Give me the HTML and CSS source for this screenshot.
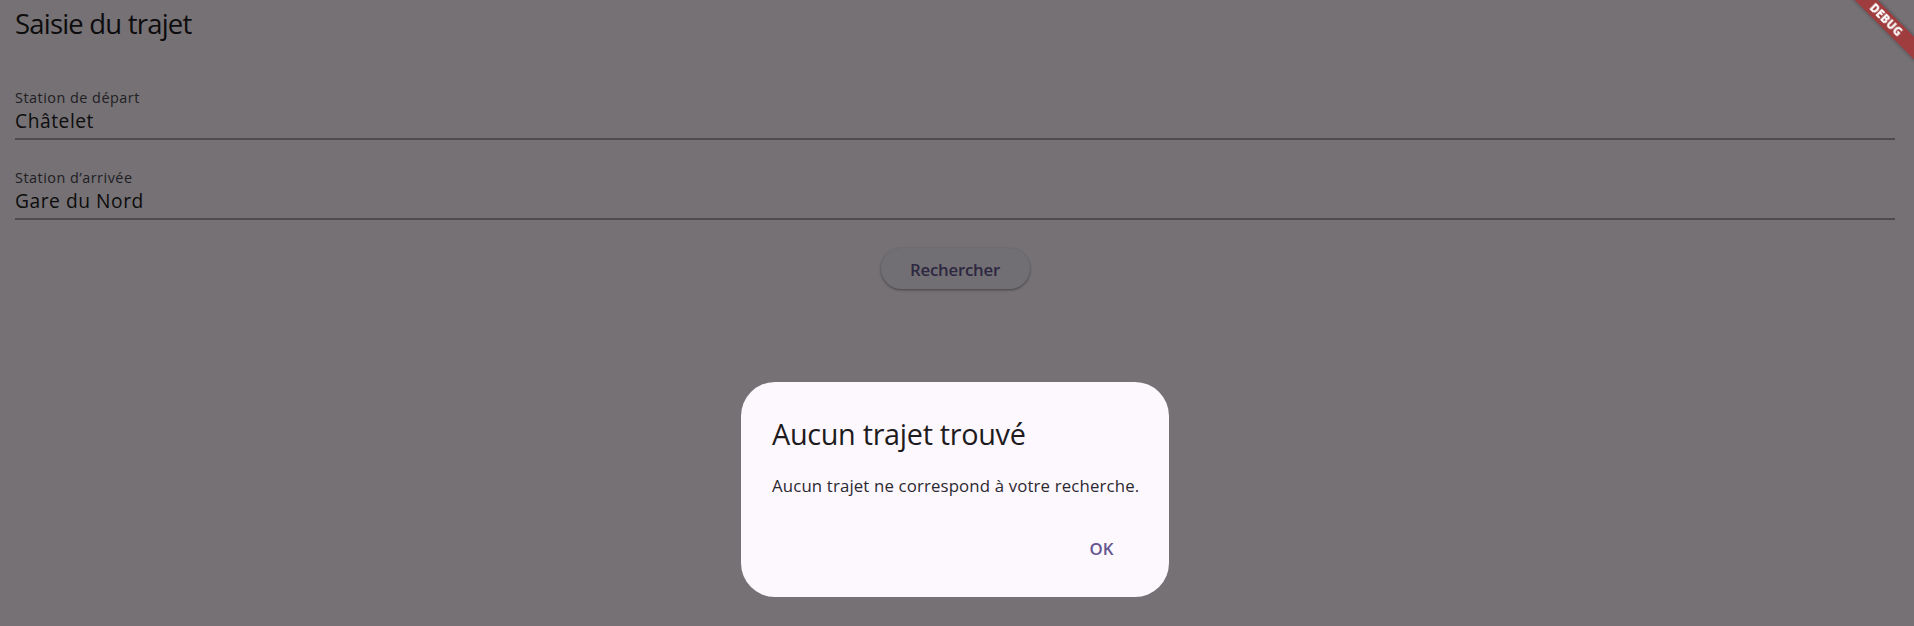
FILE: index.html
```html
<!DOCTYPE html>
<html lang="fr">
<head>
<meta charset="utf-8">
<title>Saisie du trajet</title>
<link rel="stylesheet" href="styles.css">
</head>
<body>
<div class="app">
  <h1 class="page-title">Saisie du trajet</h1>
  <div class="form">
    <div class="field">
      <label class="field-label">Station de départ</label>
      <div class="field-input">Châtelet</div>
    </div>
    <div class="field">
      <label class="field-label">Station d’arrivée</label>
      <div class="field-input">Gare du Nord</div>
    </div>
    <div class="actions">
      <button class="elevated-btn" type="button">Rechercher</button>
    </div>
  </div>
</div>

<div class="scrim">
  <div class="dialog" role="alertdialog">
    <h2 class="dialog-title">Aucun trajet trouvé</h2>
    <p class="dialog-content">Aucun trajet ne correspond à votre recherche.</p>
    <div class="dialog-actions">
      <button class="text-btn" type="button">OK</button>
    </div>
  </div>
</div>

<div class="debug-corner">
  <div class="debug-banner"><span class="debug-text">DEBUG</span></div>
</div>
</body>
</html>
```

FILE: styles.css
```css
* { box-sizing: border-box; }

html, body {
  margin: 0;
  padding: 0;
  width: 1914px;
  height: 626px;
  overflow: hidden;
}

body {
  background: #fef7ff;
  font-family: "Open Sans", "Noto Sans", sans-serif;
  color: #1d1b20;
}

.app {
  padding: 6px 19px 0 15px;
}

.page-title {
  margin: 0;
  font-size: 27.5px;
  line-height: 36px;
  font-weight: 400;
  letter-spacing: -0.8px;
  color: #1d1b20;
}

.form {
  display: flex;
  flex-direction: column;
  margin-top: 47px;
}

.field {
  display: flex;
  flex-direction: column;
  height: 80px;
}

.field-label {
  font-size: 14.4px;
  line-height: 18px;
  letter-spacing: 0.5px;
  color: #49454f;
  height: 18px;
}

.field-input {
  margin-top: 2px;
  font-size: 19.2px;
  line-height: 24px;
  letter-spacing: 0.55px;
  color: #1d1b20;
  padding-bottom: 5px;
  border-bottom: 2px solid #aaa3ac;
}

.actions {
  display: flex;
  justify-content: center;
  margin-top: -1px;
}

.elevated-btn {
  width: 149px;
  height: 41px;
  border: none;
  border-radius: 21px;
  background: #f7f2fa;
  color: #65558f;
  font-family: "Open Sans", "Noto Sans", sans-serif;
  font-size: 16.8px;
  font-weight: 600;
  letter-spacing: -0.2px;
  padding: 2px 0 0 0;
  box-shadow: 0 1px 3px rgba(0, 0, 0, 0.3), 0 1px 2px rgba(0, 0, 0, 0.15);
}

.scrim {
  position: fixed;
  inset: 0;
  background: rgba(0, 0, 0, 0.54);
  display: flex;
  justify-content: center;
  align-items: flex-start;
  padding: 382px 4px 0 0;
}

.dialog {
  width: 428px;
  height: 215px;
  background: #fdf7fe;
  border-radius: 34px;
  padding: 33px 29px 0 31px;
  display: flex;
  flex-direction: column;
}

.dialog-title {
  margin: 0;
  font-size: 28.8px;
  line-height: 38px;
  font-weight: 400;
  letter-spacing: -0.3px;
  color: #1d1b20;
}

.dialog-content {
  margin: 21px 0 0 0;
  font-size: 16.8px;
  line-height: 24px;
  letter-spacing: 0.15px;
  color: #2b2930;
}

.dialog-actions {
  display: flex;
  justify-content: flex-end;
  margin-top: 27px;
}

.text-btn {
  min-width: 77px;
  height: 48px;
  border: none;
  background: transparent;
  color: #65558f;
  font-family: "Open Sans", "Noto Sans", sans-serif;
  font-size: 16.8px;
  font-weight: 600;
  line-height: 24px;
  padding: 0 14px;
}

.debug-corner {
  position: fixed;
  top: 0;
  right: 0;
  width: 90px;
  height: 90px;
  overflow: hidden;
  pointer-events: none;
}

.debug-banner {
  position: absolute;
  left: 9.5px;
  top: 12px;
  width: 104px;
  height: 16px;
  transform: rotate(45deg);
  background: rgba(183, 28, 28, 0.63);
  box-shadow: 0 0 4px rgba(0, 0, 0, 0.35);
  display: flex;
  justify-content: center;
  align-items: center;
}

.debug-text {
  color: #fff;
  font-family: "Open Sans", "Noto Sans", sans-serif;
  font-size: 11.5px;
  font-weight: 800;
  line-height: 1;
  letter-spacing: 0.2px;
}
```
